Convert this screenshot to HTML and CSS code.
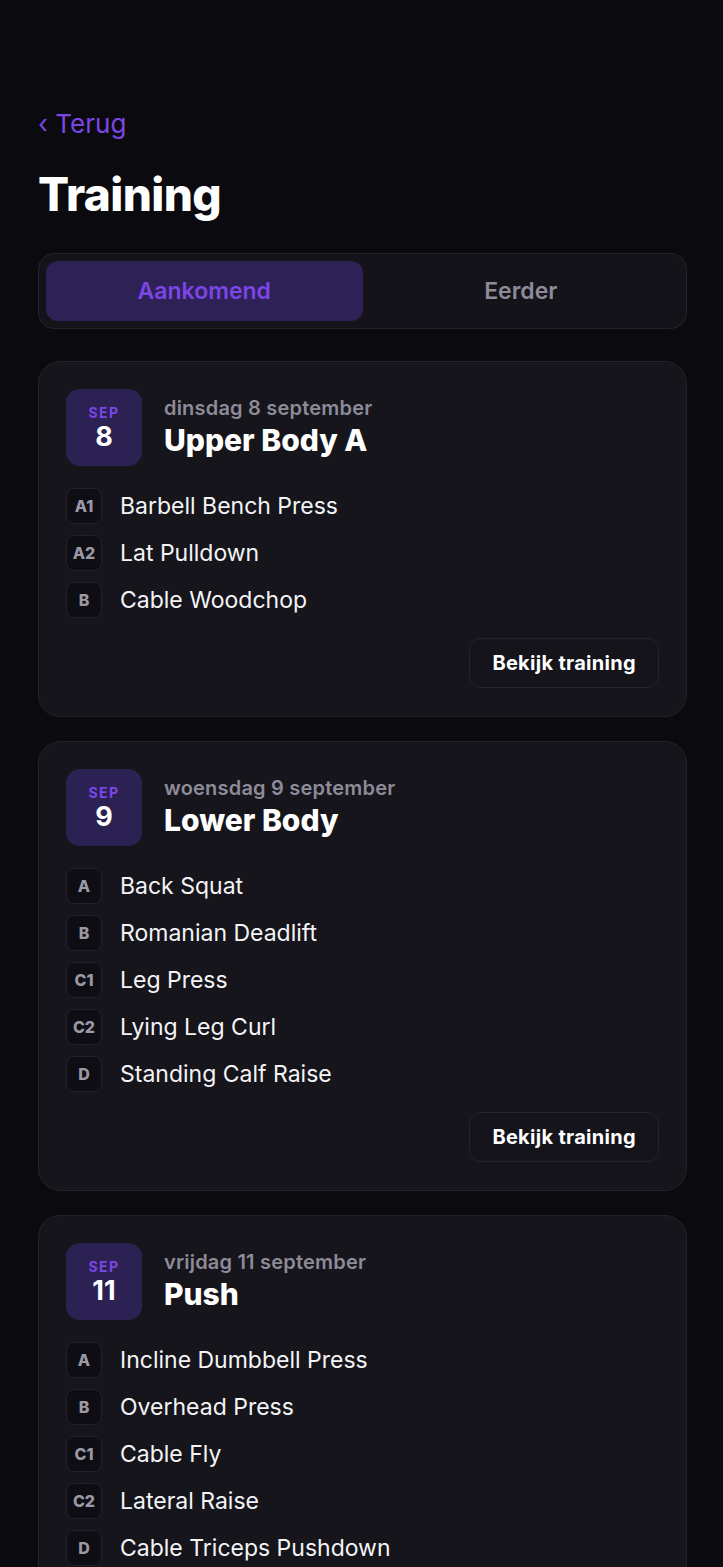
FILE: index.html
```html
<!DOCTYPE html>
<html lang="nl">
  <head>
    <meta charset="UTF-8" />
    <meta name="viewport" content="width=device-width, initial-scale=1.0" />
    <title>Training</title>
    <link rel="stylesheet" href="styles.css">
  </head>
  <body>
    <main class="page">
      <a class="back" href="#">&lsaquo; Terug</a>
      <h1>Training</h1>

      <div class="tabs">
        <button class="tab active">Aankomend</button>
        <button class="tab">Eerder</button>
      </div>

      <section class="card">
        <div class="card-head">
          <div class="date-box">
            <span class="month">SEP</span>
            <span class="day">8</span>
          </div>
          <div class="titles">
            <div class="date-text">dinsdag 8 september</div>
            <h2>Upper Body A</h2>
          </div>
        </div>
        <ul class="exercises">
          <li><span class="tag">A1</span>Barbell Bench Press</li>
          <li><span class="tag">A2</span>Lat Pulldown</li>
          <li><span class="tag">B</span>Cable Woodchop</li>
        </ul>
        <div class="actions">
          <button class="view">Bekijk training</button>
        </div>
      </section>

      <section class="card">
        <div class="card-head">
          <div class="date-box">
            <span class="month">SEP</span>
            <span class="day">9</span>
          </div>
          <div class="titles">
            <div class="date-text">woensdag 9 september</div>
            <h2>Lower Body</h2>
          </div>
        </div>
        <ul class="exercises">
          <li><span class="tag">A</span>Back Squat</li>
          <li><span class="tag">B</span>Romanian Deadlift</li>
          <li><span class="tag">C1</span>Leg Press</li>
          <li><span class="tag">C2</span>Lying Leg Curl</li>
          <li><span class="tag">D</span>Standing Calf Raise</li>
        </ul>
        <div class="actions">
          <button class="view">Bekijk training</button>
        </div>
      </section>

      <section class="card">
        <div class="card-head">
          <div class="date-box">
            <span class="month">SEP</span>
            <span class="day">11</span>
          </div>
          <div class="titles">
            <div class="date-text">vrijdag 11 september</div>
            <h2>Push</h2>
          </div>
        </div>
        <ul class="exercises">
          <li><span class="tag">A</span>Incline Dumbbell Press</li>
          <li><span class="tag">B</span>Overhead Press</li>
          <li><span class="tag">C1</span>Cable Fly</li>
          <li><span class="tag">C2</span>Lateral Raise</li>
          <li><span class="tag">D</span>Cable Triceps Pushdown</li>
        </ul>
        <div class="actions">
          <button class="view">Bekijk training</button>
        </div>
      </section>
    </main>
  </body>
</html>
```

FILE: styles.css
```css
body {
  margin: 0;
  padding: 0;
  background-color: #0b0a0f;
  color: #f4f4f7;
  font-family: Inter, "Noto Sans", sans-serif;
}

.page {
  padding: 108px 36px 40px 38px;
}

.back {
  display: block;
  font-size: 26px;
  line-height: 32px;
  color: #7b46e4;
  text-decoration: none;
}

h1 {
  margin: 27px 0 0;
  font-size: 46px;
  line-height: 55px;
  font-weight: 800;
  color: #ffffff;
  letter-spacing: -0.6px;
}

.tabs {
  display: grid;
  grid-template-columns: 1fr 1fr;
  margin-top: 31px;
  padding: 7px;
  background-color: #141319;
  border: 1px solid #24232b;
  border-radius: 16px;
}

.tab {
  height: 60px;
  border: none;
  border-radius: 12px;
  background: transparent;
  font-family: inherit;
  font-size: 23px;
  font-weight: 600;
  color: #8d8b98;
  cursor: pointer;
}

.tab.active {
  background-color: #2d2156;
  color: #7c46e6;
}

.card {
  margin-top: 32px;
  padding: 27px 27px 28px;
  background-color: #16151c;
  border: 1px solid #23222b;
  border-radius: 22px;
}

.card + .card {
  margin-top: 24px;
}

.card-head {
  display: flex;
  align-items: center;
  gap: 22px;
}

.date-box {
  display: flex;
  flex-direction: column;
  align-items: center;
  justify-content: center;
  width: 76px;
  height: 77px;
  flex-shrink: 0;
  border-radius: 14px;
  background-color: #2c2153;
}

.month {
  margin-top: 2px;
  font-size: 14px;
  line-height: 16px;
  font-weight: 700;
  letter-spacing: 1.5px;
  color: #7c46e6;
}

.day {
  font-size: 27px;
  line-height: 31px;
  font-weight: 700;
  color: #ffffff;
}

.date-text {
  font-size: 20px;
  line-height: 23px;
  font-weight: 600;
  letter-spacing: 0.2px;
  color: #8d8b98;
}

h2 {
  margin: 3px 0 0;
  font-size: 30px;
  line-height: 35px;
  font-weight: 800;
  color: #ffffff;
}

.exercises {
  list-style: none;
  margin: 22px 0 0;
  padding: 0;
  display: flex;
  flex-direction: column;
  gap: 11px;
}

.exercises li {
  display: flex;
  align-items: center;
  gap: 18px;
  height: 36px;
  font-size: 23px;
  color: #f4f4f7;
}

.tag {
  display: flex;
  align-items: center;
  justify-content: center;
  width: 34px;
  height: 34px;
  flex-shrink: 0;
  border: 1px solid #22212a;
  border-radius: 8px;
  background-color: #0e0d13;
  font-size: 16px;
  font-weight: 800;
  color: #9a98a6;
}

.actions {
  display: flex;
  justify-content: flex-end;
  margin-top: 20px;
}

.view {
  height: 50px;
  padding: 0 22px;
  border: 1px solid #26252e;
  border-radius: 12px;
  background-color: #15141a;
  font-family: inherit;
  font-size: 20px;
  font-weight: 700;
  letter-spacing: 0.3px;
  color: #ffffff;
  cursor: pointer;
}
```
